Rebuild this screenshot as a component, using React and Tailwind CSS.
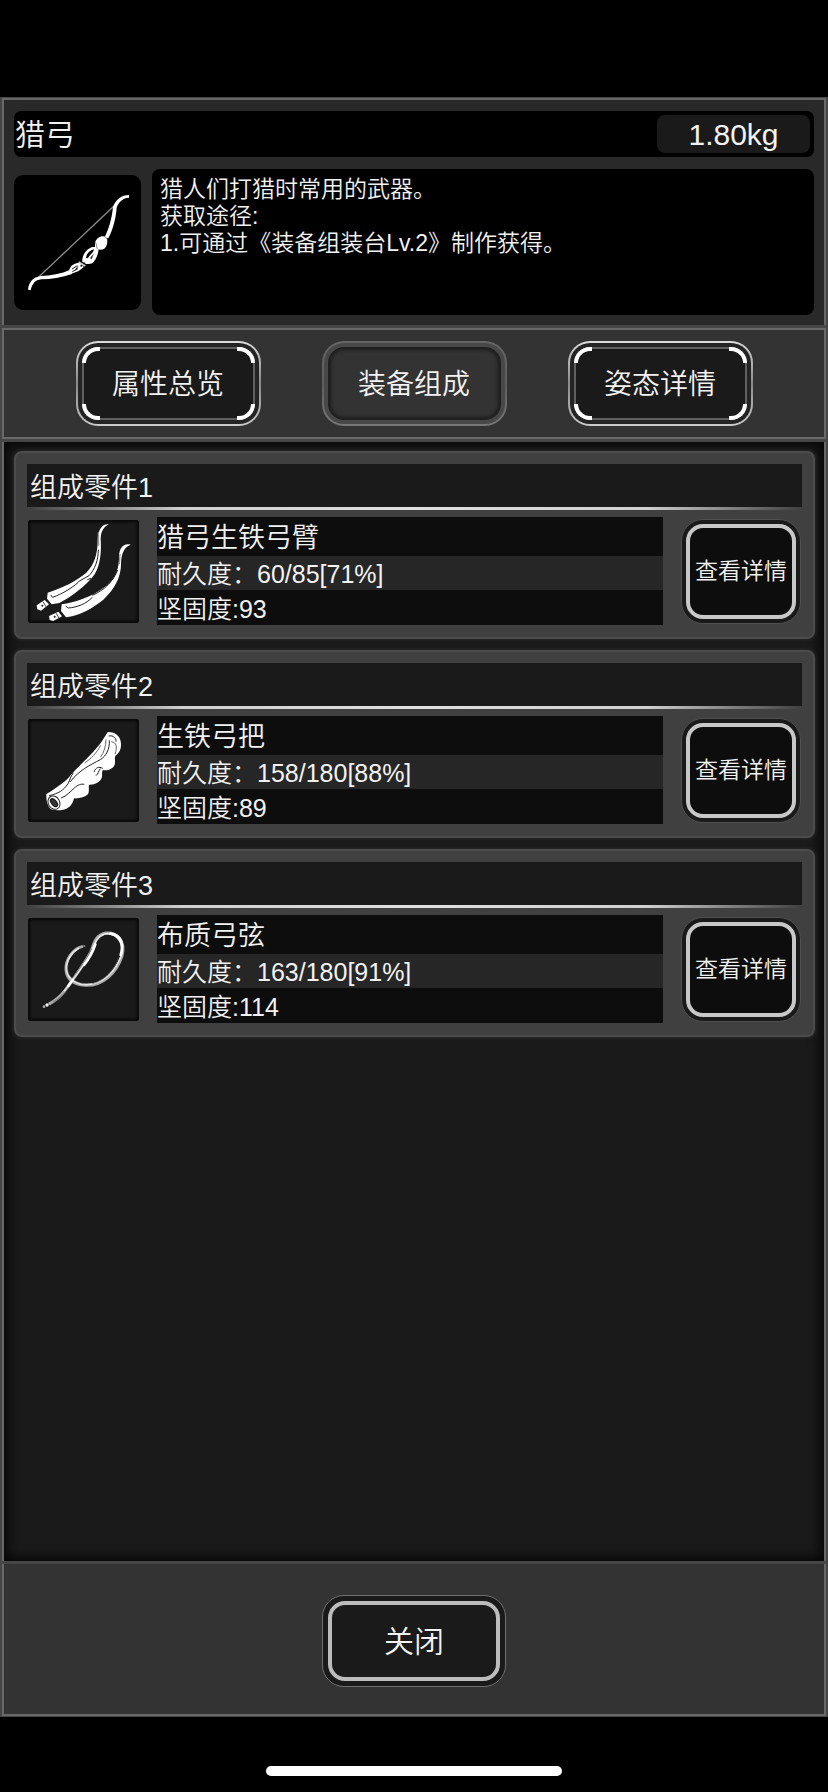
import { useState } from 'react';

const tabs = ['属性总览', '装备组成', '姿态详情'];

const parts = [
  { name: '猎弓生铁弓臂', durability: '60/85[71%]', firmness: 93, Icon: LimbsIcon },
  { name: '生铁弓把', durability: '158/180[88%]', firmness: 89, Icon: GripIcon },
  { name: '布质弓弦', durability: '163/180[91%]', firmness: 114, Icon: StringIcon },
];

function BowIcon() {
  return (
    <svg viewBox="12 27 381 405" className="w-full h-full" fill="none" aria-hidden="true">
      <path d="M86 333 L312 120" stroke="#8a8a8a" strokeWidth="4" />
      <path d="M357 87 C334 87 317 101 309 122 C306 155 297 188 283 215 L295 217 C309 190 318 155 320 125 C326 107 339 96 357 95Z" fill="#fff" />
      <path d="M54 371 C57 347 69 334 92 330 C122 329 154 323 181 311 L186 324 C156 334 122 340 94 340 C75 342 66 354 62 373Z" fill="#fff" />
      <path d="M255 231 C258 216 275 207 288 213 C295 223 292 240 283 248 C272 254 260 250 255 242Z" fill="#fff" />
      <path d="M217 280 C219 264 230 248 248 243 L266 243 C266 264 258 281 247 292 C236 296 225 295 217 287Z" fill="#fff" />
      <path d="M228 276 C229 264 238 253 252 250 C251 260 240 265 234 276Z" fill="#000" />
      <path d="M240 276 L252 262 L245 280Z" fill="#333" />
      <path d="M178 311 C183 294 201 288 213 292 L221 303 L206 315 L184 323Z" fill="#fff" />
      <path d="M186 309 L202 299 M187 317 L204 308 M196 312 L204 301" stroke="#222" strokeWidth="3" />
      <path d="M206 288 L226 300" stroke="#ccc" strokeWidth="5" />
      <circle cx="214" cy="299" r="3" fill="#111" />
      <circle cx="222" cy="292" r="3" fill="#111" />
      <path d="M257 229 L262 249 M283 211 L294 220" stroke="#555" strokeWidth="2" />
    </svg>
  );
}

function LimbsIcon() {
  return (
    <svg viewBox="25 28 333 309" className="w-full h-full" fill="none" aria-hidden="true">
      <path d="M268 41 C248 38 235 56 234 88 C234 131 224 162 200 186 C171 211 123 234 84 246 L82 264 L96 281 L119 277 C158 258 202 222 225 191 C244 160 245 117 243 84 C244 60 254 47 268 41Z" fill="#fff" />
      <path d="M333 102 C311 96 296 113 298 146 C297 181 281 213 254 230 C215 260 165 276 126 281 L124 301 L139 320 C177 316 221 292 251 267 C285 236 305 198 304 158 C305 127 315 108 333 102Z" fill="#fff" />
      <path d="M51 284 L75 268 L88 281 L64 300 L53 296Z" fill="#fff" />
      <path d="M88 316 L116 303 L127 317 L101 331 L90 328Z" fill="#fff" />
      <path d="M70 273 L79 288 M109 307 L118 322" stroke="#444" strokeWidth="3" />
      <circle cx="68" cy="285" r="3" fill="#222" />
      <circle cx="105" cy="318" r="3" fill="#222" />
      <path d="M93 253 L99 260 C128 249 151 236 176 215 M176 213 L208 195 C226 176 236 148 236 117 M203 207 L214 203" stroke="#222" strokeWidth="3" />
      <path d="M138 286 L146 292 C172 290 199 280 218 260 M218 254 C254 239 282 210 294 178" stroke="#222" strokeWidth="3" />
      <path d="M236 65 L237 105 M301 130 L299 160" stroke="#999" strokeWidth="4" />
    </svg>
  );
}

function GripIcon() {
  return (
    <svg viewBox="25 28 333 309" className="w-full h-full" fill="none" aria-hidden="true">
      <path d="M264 67 C248 95 236 111 211 137 C185 163 164 183 144 207 C122 227 97 242 80 254 C79 274 84 290 94 299 C111 304 126 302 139 298 C153 292 160 280 163 266 C178 267 196 263 205 254 C210 242 206 232 208 225 C226 226 241 217 246 205 C249 196 245 187 250 181 C264 184 281 177 285 165 C289 150 281 142 291 135 C303 126 307 107 302 91 C298 76 283 66 264 67Z" fill="#fff" />
      <ellipse cx="103" cy="279" rx="17" ry="21" transform="rotate(-32 103 279)" fill="#fff" stroke="#222" strokeWidth="3" />
      <ellipse cx="103" cy="279" rx="8" ry="14" transform="rotate(-38 103 279)" fill="#333" stroke="#111" strokeWidth="3" />
      <path d="M88 258 C116 252 132 242 145 222 C151 211 153 199 161 190 M124 265 C142 259 151 246 164 235 C175 225 184 222 194 224 M151 217 C178 182 211 166 242 150 C260 139 270 119 269 92 M223 187 C228 173 238 170 249 176 M229 198 C236 193 236 184 242 177 M267 79 C282 76 290 86 289 96" stroke="#222" strokeWidth="3" />
      <path d="M242 143 C253 130 259 108 259 89 M275 96 C290 98 294 112 286 133 M195 160 C214 147 230 131 243 107" stroke="#666" strokeWidth="3" />
    </svg>
  );
}

function StringIcon() {
  return (
    <svg viewBox="25 25 333 309" className="w-full h-full" fill="none" strokeLinecap="round" aria-hidden="true">
      <path d="M187 111 C159 118 137 151 139 181 C142 211 163 224 197 227 C251 229 291 188 307 139 C319 92 291 67 259 70 C227 75 222 103 214 126 C191 168 160 208 135 244 C120 263 105 274 90 282" stroke="#aaa" strokeWidth="9" />
      <path d="M177 116 C154 129 138 155 141 181 C145 207 168 224 201 225 C252 224 288 183 304 140 C315 99 291 73 263 72 C232 75 224 105 216 126 C193 168 160 208 135 243" stroke="#e5e5e5" strokeWidth="5" />
      <path d="M145 167 C140 195 157 215 191 222 M219 222 C257 211 284 180 296 145 M216 119 C190 169 158 203 135 237 M151 228 C133 256 117 268 101 277" stroke="#555" strokeWidth="2" />
      <path d="M272 72 C305 75 313 105 303 136 M227 104 C219 128 207 149 193 166 M159 210 L146 229" stroke="#fff" strokeWidth="8" />
      <circle cx="194" cy="109" r="3" fill="#888" />
      <circle cx="82" cy="286" r="5" fill="#eee" />
      <circle cx="73" cy="291" r="4" fill="#aaa" />
    </svg>
  );
}

function TabButton({ label, active, onClick }) {
  if (active) {
    return (
      <button
        type="button"
        aria-pressed="true"
        onClick={onClick}
        className="w-[185px] h-[85px] p-[2px] rounded-[22px] bg-linear-to-b from-[#666] via-[#5e5e5e] to-[#777]"
      >
        <span className="flex w-full h-full p-[4px] rounded-[20px] bg-[#484848]">
          <span className="flex-1 flex items-center justify-center pt-[2px] rounded-[16px] border-2 border-[#202020] bg-[#333] shadow-[inset_0_0_4px_#111] text-[28px] leading-8">
            {label}
          </span>
        </span>
      </button>
    );
  }

  return (
    <button
      type="button"
      aria-pressed="false"
      onClick={onClick}
      className="w-[185px] h-[85px] p-[2px] rounded-[22px] bg-linear-to-b from-[#ddd] via-[#8a8a8a] to-[#ccc]"
    >
      <span className="flex w-full h-full p-[4px] rounded-[20px] bg-[#242424]">
        <span className="relative flex-1 flex items-center justify-center pt-[2px] rounded-[16px] border-2 border-[#606060] bg-[#1a1a1a] text-[28px] leading-8">
          {/* Bright corner brackets */}
          <span className="absolute -top-[2px] -left-[2px] w-[18px] h-4 border-t-4 border-l-4 border-white rounded-tl-[16px]" />
          <span className="absolute -top-[2px] -right-[2px] w-[18px] h-4 border-t-4 border-r-4 border-white rounded-tr-[16px]" />
          <span className="absolute -bottom-[2px] -left-[2px] w-[18px] h-4 border-b-4 border-l-4 border-white rounded-bl-[16px]" />
          <span className="absolute -right-[2px] -bottom-[2px] w-[18px] h-4 border-b-4 border-r-4 border-white rounded-br-[16px]" />
          {label}
        </span>
      </span>
    </button>
  );
}

function PartCard({ index, part }) {
  const { name, durability, firmness, Icon } = part;

  return (
    <li className="pt-[11px] pb-3 px-[11px] rounded-[8px] border-2 border-[#4c4c4c] bg-[#404040] shadow-[0_0_4px_#333]">
      <h2 className="h-[43px] px-[3px] pt-1 flex items-center bg-[#1a1a1a] text-[27px] leading-8">
        组成零件{index}
      </h2>
      <div className="h-[3px] bg-[linear-gradient(to_right,#404040,#d0d0d0_20%,#e0e0e0_50%,#d0d0d0_80%,#404040)]" />

      <div className="mt-[7px] px-[1px] flex items-center gap-[18px]">
        <div className="w-[111px] h-[103px] shrink-0 rounded-[3px] bg-[#1a1a1a] shadow-[inset_0_0_3px_2px_#080808]">
          <Icon />
        </div>

        <div className="flex-1 min-w-0">
          <div className="h-[39px] pt-[2px] flex items-center bg-[#0d0d0d] text-[27px] leading-8">{name}</div>
          <div className="h-[34px] pt-[2px] flex items-center bg-[#262626] text-[25px] leading-8">耐久度：{durability}</div>
          <div className="h-[35px] pt-[2px] flex items-center bg-[#0d0d0d] text-[25px] leading-8">坚固度:{firmness}</div>
        </div>

        <button
          type="button"
          className="w-[120px] h-[105px] shrink-0 flex p-[4px] rounded-[22px] border border-[#505050] bg-[#1a1a1a]"
        >
          <span className="flex-1 self-stretch flex items-center justify-center rounded-[17px] border-4 border-[#c8c8c8] bg-[#0d0d0d] text-[23px] leading-7 whitespace-nowrap">
            查看详情
          </span>
        </button>
      </div>
    </li>
  );
}

function App() {
  const [activeTab, setActiveTab] = useState('装备组成');

  return (
    <div className="min-h-screen flex flex-col pt-[97px] bg-black text-[#f2f2f2] font-[350] font-['Liberation_Sans','Noto_Sans_CJK_SC',sans-serif]">
      <main className="flex-1 flex flex-col gap-[3px] px-[2px] py-[1px] bg-[#464646]">
        {/* Item summary */}
        <header className="flex flex-col gap-3 px-[10px] pt-[11px] pb-[10px] border-x-2 border-t-2 border-[#686868] bg-[#292929]">
          <div className="h-[46px] pl-[1px] pr-1 flex items-center justify-between rounded-[7px] bg-black">
            <h1 className="pt-[2px] text-[30px] leading-9">猎弓</h1>
            <span className="w-[153px] h-[38px] pt-[2px] flex items-center justify-center rounded-[8px] bg-[#1a1a1a] text-[30px] leading-9">
              1.80kg
            </span>
          </div>
          <div className="flex items-center gap-[11px]">
            <div className="w-[127px] h-[135px] shrink-0 rounded-[9px] bg-black">
              <BowIcon />
            </div>
            <div className="flex-1 min-h-[146px] px-2 py-[7px] rounded-[8px] bg-black text-[23px] leading-[27px]">
              <p>猎人们打猎时常用的武器。</p>
              <p>获取途径:</p>
              <p>1.可通过《装备组装台Lv.2》制作获得。</p>
            </div>
          </div>
        </header>

        <nav className="flex justify-center gap-[61px] py-[11px] border-2 border-[#6a6a6a] bg-[#333]">
          {tabs.map((tab) => (
            <TabButton key={tab} label={tab} active={tab === activeTab} onClick={() => setActiveTab(tab)} />
          ))}
        </nav>

        <div className="flex-1 pt-[9px] pl-[10px] pr-[9px] border-x-2 border-[#686868] bg-[#1a1a1a] shadow-[inset_0_0_12px_3px_#050505]">
          <ul className="flex flex-col gap-[11px]">
            {parts.map((part, i) => (
              <PartCard key={part.name} index={i + 1} part={part} />
            ))}
          </ul>
        </div>

        <footer className="flex justify-center pt-[31px] pb-[27px] border-x-2 border-b-2 border-[#686868] bg-[#333]">
          <button
            type="button"
            className="w-[184px] h-[92px] flex p-[5px] rounded-[22px] border border-[#707070] bg-[#1a1a1a]"
          >
            <span className="flex-1 self-stretch flex items-center justify-center pt-[2px] rounded-[17px] border-4 border-[#bcbcbc] bg-[#1a1a1a] text-[30px] leading-9">
              关闭
            </span>
          </button>
        </footer>
      </main>

      {/* Home indicator */}
      <div className="h-[75px] pt-[49px] flex justify-center">
        <div className="w-[296px] h-[10px] rounded-full bg-white" />
      </div>
    </div>
  );
}

export default App;
